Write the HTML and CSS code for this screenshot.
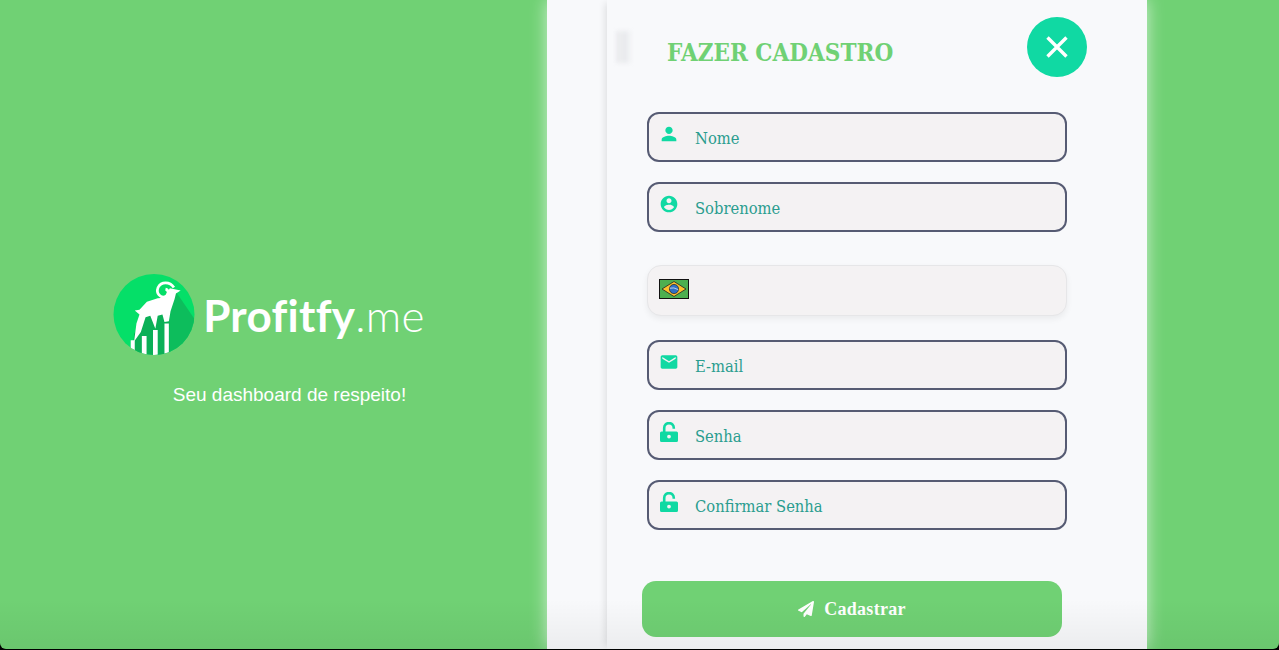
FILE: index.html
```html
<!DOCTYPE html>
<html lang="pt-BR">
<head>
    <meta charset="UTF-8">
    <title>Profitfy.me - Cadastro</title>
    <link rel="stylesheet" href="styles.css">
</head>
<body>
    <div class="page">
        <div class="brand">
            <div class="logo">
                <svg class="logo-mark" viewBox="28 18 242 240">
                    <defs><clipPath id="disc"><circle cx="149" cy="138" r="120"/></clipPath></defs>
                    <circle cx="149" cy="138" r="120" fill="#05df68"/>
                    <g clip-path="url(#disc)">
                        <path d="M215 72L275 160L240 270L150 270L195 110Z" fill="#0dbd5c"/>
                        <path d="M85 258L90 195L125 140L175 135L195 160L195 258Z" fill="#0bb057"/>
                        <path d="M80 214h12v46H80zM113 202h14v58h-14zM146 184h14v76h-14zM180 165h13v95h-13z" fill="#fff"/>
                    </g>
                    <path d="M196 60L228 67L214 76L210 92L198 128L193 158L180 160L174 138L160 142L153 180L138 142L124 146L110 190L90 218L97 165L106 138L92 126L106 124L128 100L160 90L178 88Z" fill="#fff"/>
                    <path d="M208 58C196 40 170 40 161 58C154 76 168 90 183 85C194 80 193 65 183 63" fill="none" stroke="#fff" stroke-width="8"/>
                </svg>
                <span class="logo-text">Profitfy<span class="logo-tld">.me</span></span>
            </div>
            <p class="tagline">Seu dashboard de respeito!</p>
        </div>

        <div class="panel">
            <div class="sheet">
                <i class="smudge"></i>
                <div class="sheet-head">
                    <h1>FAZER CADASTRO</h1>
                    <button class="close-btn" aria-label="Fechar">
                        <svg viewBox="0 0 24 24"><path d="M2.5 2.5l19 19M21.5 2.5l-19 19"/></svg>
                    </button>
                </div>

                <div class="group">
                    <label class="field">
                        <span class="ico-box"><svg class="ico ico-person" viewBox="0 0 24 24"><path d="M12 12c2.21 0 4-1.79 4-4s-1.79-4-4-4-4 1.79-4 4 1.79 4 4 4zm0 2c-2.67 0-8 1.34-8 4v2h16v-2c0-2.66-5.33-4-8-4z"/></svg></span>
                        <span>Nome</span>
                    </label>
                    <label class="field">
                        <span class="ico-box"><svg class="ico" viewBox="0 0 24 24"><path d="M12 2C6.48 2 2 6.48 2 12s4.48 10 10 10 10-4.48 10-10S17.52 2 12 2zm0 3c1.66 0 3 1.34 3 3s-1.34 3-3 3-3-1.34-3-3 1.34-3 3-3zm0 14.2c-2.5 0-4.71-1.28-6-3.22.03-1.99 4-3.08 6-3.08 1.99 0 5.97 1.09 6 3.08-1.29 1.94-3.5 3.22-6 3.22z"/></svg></span>
                        <span>Sobrenome</span>
                    </label>
                </div>

                <div class="phone">
                    <svg class="flag" viewBox="0 0 30 20">
                        <rect x=".5" y=".5" width="29" height="19" fill="#4caf50" stroke="#111"/>
                        <path d="M15 2.5L27 10L15 17.5L3 10Z" fill="#fbc02d" stroke="#222" stroke-width=".8"/>
                        <circle cx="15" cy="10" r="4.6" fill="#2f6fc4" stroke="#222" stroke-width=".7"/>
                        <path d="M10.8 9.2q4-1.2 8.4 1.4" fill="none" stroke="#dfe8f5" stroke-width=".8"/>
                    </svg>
                </div>

                <div class="group">
                    <label class="field">
                        <span class="ico-box"><svg class="ico" viewBox="0 0 24 24"><path d="M20 4H4c-1.1 0-1.99.9-1.99 2L2 18c0 1.1.9 2 2 2h16c1.1 0 2-.9 2-2V6c0-1.1-.9-2-2-2zm0 4l-8 5-8-5V6l8 5 8-5v2z"/></svg></span>
                        <span>E-mail</span>
                    </label>
                    <label class="field">
                        <span class="ico-box"><svg class="ico ico-lock" viewBox="0 0 18 20"><path class="shackle" d="M4.2 10V5.9a4.8 4.8 0 0 1 9.6 0v.9"/><path fill-rule="evenodd" d="M1.5 9.5h15A1.5 1.5 0 0 1 18 11v7.5a1.5 1.5 0 0 1-1.5 1.5h-15A1.5 1.5 0 0 1 0 18.5V11a1.5 1.5 0 0 1 1.5-1.5zM9 12.7a1.9 1.9 0 1 0 0 3.8 1.9 1.9 0 0 0 0-3.8z"/></svg></span>
                        <span>Senha</span>
                    </label>
                    <label class="field">
                        <span class="ico-box"><svg class="ico ico-lock" viewBox="0 0 18 20"><path class="shackle" d="M4.2 10V5.9a4.8 4.8 0 0 1 9.6 0v.9"/><path fill-rule="evenodd" d="M1.5 9.5h15A1.5 1.5 0 0 1 18 11v7.5a1.5 1.5 0 0 1-1.5 1.5h-15A1.5 1.5 0 0 1 0 18.5V11a1.5 1.5 0 0 1 1.5-1.5zM9 12.7a1.9 1.9 0 1 0 0 3.8 1.9 1.9 0 0 0 0-3.8z"/></svg></span>
                        <span>Confirmar Senha</span>
                    </label>
                </div>

                <button class="submit-btn">
                    <svg viewBox="0 0 512 512"><path d="M476 3.2L12.5 270.6c-18.1 10.4-15.8 35.6 2.2 43.2L121 358.4l287.3-253.2c5.5-4.9 13.3 2.6 8.6 8.3L176 407v80.5c0 23.6 28.5 32.9 42.5 15.8L282 426l124.6 52.2c14.2 6 30.4-2.9 33-18.2l72-432C515 7.8 493.3-6.8 476 3.2z"/></svg>
                    Cadastrar
                </button>
            </div>
        </div>
    </div>
</body>
</html>
```

FILE: styles.css
```css
html, body {
    margin: 0;
    padding: 0;
    height: 650px;
    overflow: hidden;
    background: #000;
}

.page {
    position: relative;
    display: flex;
    height: 649px;
    background: #70d174;
    border-bottom-left-radius: 6px;
    border-bottom-right-radius: 6px;
    overflow: hidden;
}

/* darker strip along the bottom edge */
.page::after {
    content: "";
    position: absolute;
    left: 0;
    right: 0;
    bottom: 0;
    height: 50px;
    background: linear-gradient(rgba(0,0,0,0), rgba(0,0,0,0.05));
    pointer-events: none;
}

.brand {
    width: 547px;
    flex-shrink: 0;
    display: flex;
    flex-direction: column;
    align-items: center;
    padding: 274px 9px 0 0;
    box-sizing: border-box;
}

.logo {
    display: flex;
    align-items: center;
    gap: 8px;
}

.logo-mark {
    width: 82px;
    height: 81px;
}

.logo-text {
    font-family: "Lato", sans-serif;
    font-weight: 700;
    font-size: 44px;
    letter-spacing: 0.3px;
    font-variant-ligatures: none;
    color: #fff;
}

.logo-tld {
    font-weight: 300;
}

.tagline {
    margin: 28px 0 0 41px;
    font-family: "Liberation Sans", Arial, sans-serif;
    font-size: 19px;
    line-height: 24px;
    color: #fff;
}

.panel {
    width: 600px;
    height: 100%;
    flex-shrink: 0;
    padding-left: 60px;
    box-sizing: border-box;
    background: #f8f9fb;
    box-shadow: 0 0 16px rgba(255,255,255,0.65);
}

.sheet {
    position: relative;
    height: 100%;
    padding: 17px 0 0 40px;
    box-sizing: border-box;
    box-shadow: -5px 0 7px -3px rgba(0,0,0,0.1);
}

.smudge {
    position: absolute;
    left: 10px;
    top: 31px;
    width: 13px;
    height: 32px;
    background: repeating-linear-gradient(90deg, #e2e3e6 0 3px, #f3f4f6 3px 6px);
    filter: blur(2px);
}

.sheet-head {
    display: flex;
    align-items: center;
    justify-content: space-between;
    width: 440px;
    height: 60px;
    box-sizing: border-box;
    padding-left: 20px;
    margin-bottom: 35px;
}

.sheet-head h1 {
    margin: 10px 0 0;
    font-family: "DejaVu Serif Condensed", "DejaVu Serif", serif;
    font-weight: 700;
    font-size: 24px;
    color: #70d174;
}

.close-btn {
    width: 60px;
    height: 60px;
    padding: 0;
    border: none;
    border-radius: 50%;
    background: #10d9a3;
    display: flex;
    align-items: center;
    justify-content: center;
}

.close-btn svg {
    width: 24px;
    height: 24px;
    fill: none;
    stroke: #fff;
    stroke-width: 3.4;
}

.group {
    display: flex;
    flex-direction: column;
    gap: 20px;
}

.field {
    display: flex;
    align-items: center;
    width: 420px;
    height: 50px;
    box-sizing: border-box;
    padding: 2px 0 0 10px;
    background: #f4f2f3;
    border: 2px solid #565b73;
    border-radius: 12px;
    font-family: "DejaVu Serif Condensed", "DejaVu Serif", serif;
    font-size: 16.4px;
    color: #2a9d8f;
}

.ico-box {
    display: flex;
    align-items: center;
    justify-content: center;
    width: 20px;
    height: 24px;
    margin: -8px 16px 0 0;
}

.ico {
    width: 20px;
    height: 20px;
    flex-shrink: 0;
    fill: #10d9a3;
}

.ico-person {
    width: 22px;
    height: 22px;
}

.ico-lock {
    width: 18px;
    height: 20px;
}

.ico-lock .shackle {
    fill: none;
    stroke: #10d9a3;
    stroke-width: 2.6;
}

.phone {
    display: flex;
    width: 420px;
    height: 51px;
    box-sizing: border-box;
    margin: 33px 0 24px;
    padding: 13px 0 0 11px;
    background: #f4f2f3;
    border: 1px solid #e6e6e8;
    border-radius: 14px;
    box-shadow: 0 3px 6px rgba(0,0,0,0.06);
}

.flag {
    width: 30px;
    height: 20px;
}

.submit-btn {
    display: flex;
    align-items: center;
    justify-content: center;
    gap: 10px;
    width: 420px;
    height: 56px;
    margin: 51px 0 0 -5px;
    border: none;
    border-radius: 14px;
    background: #70d174;
    font-family: "Liberation Serif", serif;
    font-weight: 700;
    font-size: 18px;
    letter-spacing: 0.3px;
    color: #fff;
}

.submit-btn svg {
    width: 16px;
    height: 16px;
    fill: #fff;
}
```
